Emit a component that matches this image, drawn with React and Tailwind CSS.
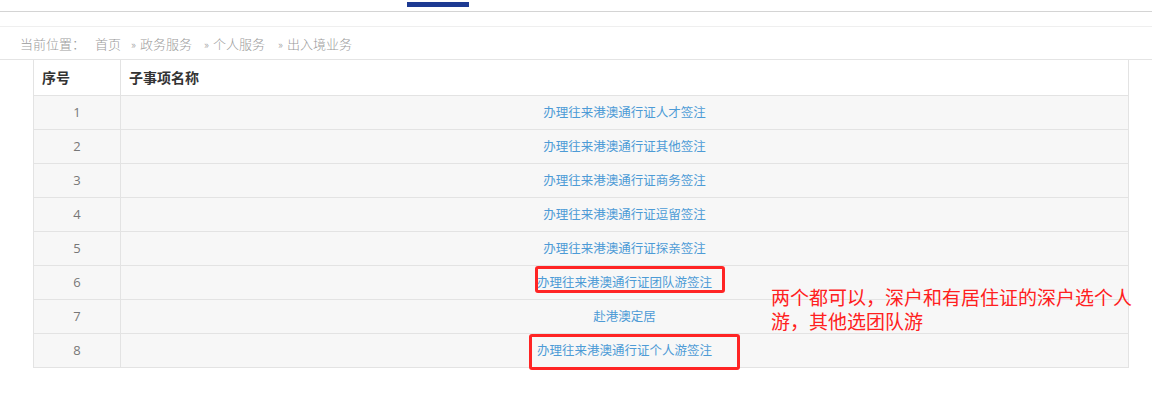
import React from "react";

const rows = [
  "办理往来港澳通行证人才签注",
  "办理往来港澳通行证其他签注",
  "办理往来港澳通行证商务签注",
  "办理往来港澳通行证逗留签注",
  "办理往来港澳通行证探亲签注",
  "办理往来港澳通行证团队游签注",
  "赴港澳定居",
  "办理往来港澳通行证个人游签注",
];

const cjk = "font-['Microsoft_YaHei','Noto_Sans_CJK_SC',sans-serif]";

export default function App() {
  return (
    <div className={`relative w-[1152px] h-[393px] overflow-hidden bg-white ${cjk}`}>
      <div className="h-[11px] pl-[407px] pt-[2px]">
        <div className="w-[62px] h-[5px] bg-[#1d3a92]" />
      </div>
      <div className="h-px bg-[#d4d4d4]" />
      <div className="h-[14px]" />
      <div className="h-px bg-[#efefef]" />
      <div className="h-[32px] flex items-center pl-[20px] text-[13px] text-[#9a9a9a] leading-none font-light">
        <span>当前位置：</span>
        <span className="ml-[10px]">首页</span>
        <span className="ml-[10px]"><span className="text-[11px] mr-[4px]">»</span>政务服务</span>
        <span className="ml-[12px]"><span className="text-[11px] mr-[4px]">»</span>个人服务</span>
        <span className="ml-[13px]"><span className="text-[11px] mr-[4px]">»</span>出入境业务</span>
      </div>
      <div className="h-px bg-[#e4e4e4]" />
      <div className="ml-[33px] w-[1096px] border-l border-r border-[#e3e3e3]">
        <div className="grid grid-cols-[87px_1fr] h-[36px] border-b border-[#e3e3e3] bg-white text-[14px] font-bold text-[#333]">
          <div className="flex items-center pl-[8px] border-r border-[#e3e3e3]">序号</div>
          <div className="flex items-center pl-[8px]">子事项名称</div>
        </div>
        {rows.map((r, i) => (
          <div key={i} className="grid grid-cols-[87px_1fr] h-[34px] border-b border-[#e3e3e3] bg-[#f7f7f7]">
            <div className="flex items-center justify-center border-r border-[#e3e3e3] font-['Open_Sans',sans-serif] text-[13px] text-[#777]">
              {i + 1}
            </div>
            <div className="flex items-center justify-center text-[12.5px] text-[#4d9bd6]">{r}</div>
          </div>
        ))}
      </div>

      <div className="absolute left-[535px] top-[266px] w-[190px] h-[27px] border-[3px] border-[#ff2424] rounded-[3px]" />
      <div className="absolute left-[529px] top-[334px] w-[211px] h-[36px] border-[3px] border-[#ff2424] rounded-[3px]" />

      <div className="absolute left-[771px] top-[285px] text-[19px] leading-[24px] text-[#ff2020] whitespace-nowrap">
        <div>两个都可以，深户和有居住证的深户选个人</div>
        <div>游，其他选团队游</div>
      </div>
    </div>
  );
}
